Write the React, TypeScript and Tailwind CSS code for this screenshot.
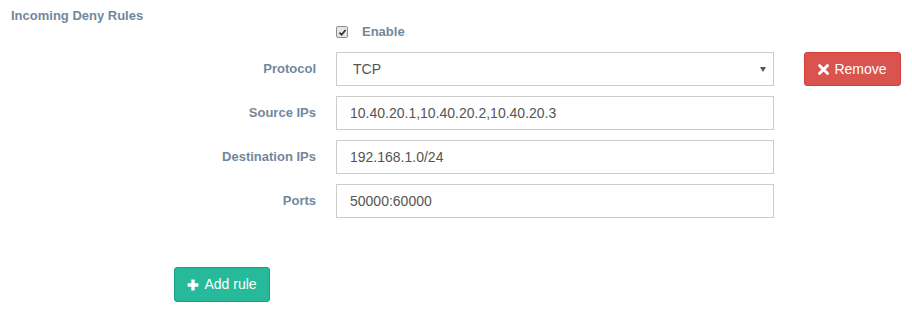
import React from "react"

const rows = [
	{ label: "Source IPs", value: "10.40.20.1,10.40.20.2,10.40.20.3" },
	{ label: "Destination IPs", value: "192.168.1.0/24" },
	{ label: "Ports", value: "50000:60000" },
]

function Times() {
	return (
		<svg viewBox="0 0 10 10" className="w-[11px] h-[11px]" aria-hidden>
			<path d="M1.5 1.5 L8.5 8.5 M8.5 1.5 L1.5 8.5" stroke="currentColor" strokeWidth="2.6" strokeLinecap="square" />
		</svg>
	)
}

function Plus() {
	return (
		<svg viewBox="0 0 10 10" className="w-[12px] h-[12px]" aria-hidden>
			<path d="M5 0.5 V9.5 M0.5 5 H9.5" stroke="currentColor" strokeWidth="2.8" />
		</svg>
	)
}

export default function App() {
	return (
		<div
			className="w-[912px] h-[309px] bg-white text-[#73879C] overflow-hidden"
			style={{ fontFamily: '"Liberation Sans", Arial, sans-serif' }}
		>
			{/* Section title */}
			<div className="pt-[8px] pl-[11px] text-[13px] leading-[16px] font-bold">
				Incoming Deny Rules
			</div>

			{/* Enable checkbox */}
			<div className="flex items-center h-[16px] pl-[336px]">
				<span className="flex items-center justify-center w-[12px] h-[12px] rounded-[2px] border border-[#8f8f8f] bg-[#e6e6e6]">
					<svg viewBox="0 0 10 10" className="w-[9px] h-[9px]" aria-hidden>
						<path d="M1.6 5.2 L4 7.6 L8.4 2.2" fill="none" stroke="#333" strokeWidth="1.9" />
					</svg>
				</span>
				<span className="ml-[14px] text-[13px] font-bold">Enable</span>
			</div>

			{/* Rule fields */}
			<div className="mt-[12px] flex flex-col gap-[10px]">
				<div className="flex items-center">
					<div className="w-[316px] text-right text-[13px] font-bold">Protocol</div>
					<div className="ml-[20px] w-[438px] h-[34px] border border-[#ccc] flex items-center justify-between pl-[16px] pr-[7px] text-[14px] text-[#555]">
						<span>TCP</span>
						<svg viewBox="0 0 6 5" className="w-[6px] h-[5px]" aria-hidden>
							<path d="M0 0 H6 L3 5 Z" fill="#555" />
						</svg>
					</div>
					<button className="ml-[30px] w-[97px] h-[34px] rounded-[3px] bg-[#d9534f] border border-[#d43f3a] text-white text-[14px] flex items-center justify-center gap-[5px]">
						<Times />
						<span>Remove</span>
					</button>
				</div>

				{rows.map((r) => (
					<div key={r.label} className="flex items-center">
						<div className="w-[316px] text-right text-[13px] font-bold">{r.label}</div>
						<div className="ml-[20px] w-[438px] h-[34px] border border-[#ccc] flex items-center pl-[13px] text-[14px] text-[#555]">
							{r.value}
						</div>
					</div>
				))}
			</div>

			{/* Add rule */}
			<div className="mt-[49px] pl-[174px]">
				<button className="w-[96px] h-[35px] rounded-[3px] bg-[#26B99A] border border-[#169F85] text-white text-[14px] flex items-center justify-center gap-[5px]">
					<Plus />
					<span>Add rule</span>
				</button>
			</div>
		</div>
	)
}
